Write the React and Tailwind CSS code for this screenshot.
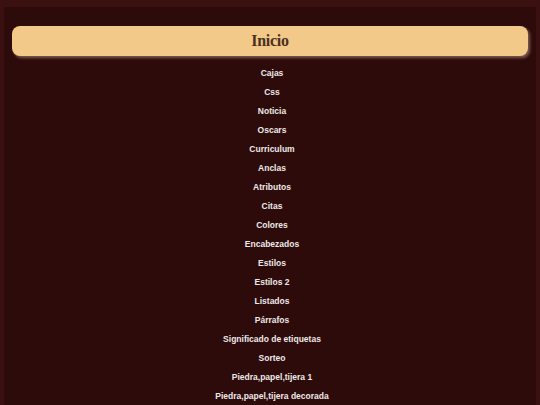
export default function App() {
  const items = [
    "Cajas","Css","Noticia","Oscars","Curriculum","Anclas","Atributos","Citas","Colores","Encabezados","Estilos","Estilos 2","Listados","Párrafos","Significado de etiquetas","Sorteo","Piedra,papel,tijera 1","Piedra,papel,tijera decorada",
  ];
  return (
    <div className="min-h-[405px] bg-[#3a1010] pt-[7px] px-[4px]">
      <div className="bg-[#2d0b0b] min-h-[398px] px-[8px] pt-[19px]">
        <div className="h-[30px] rounded-[8px] bg-[#f2c988] shadow-[2px_2px_3px_#7d5a4c] flex items-center justify-center">
          <h1 className="text-[16px] font-bold text-[#4b3022] leading-none tracking-[-0.3px]" style={{fontFamily: '"Liberation Serif", serif'}}>Inicio</h1>
        </div>
        <ul className="flex flex-col items-center pt-[8px] pl-[4px]" style={{fontFamily: '"Liberation Sans", Arial, sans-serif'}}>
          {items.map((t) => (
            <li key={t} className="h-[19px] flex items-center text-[8.5px] font-bold text-[#eee8e8]">{t}</li>
          ))}
        </ul>
      </div>
    </div>
  );
}
